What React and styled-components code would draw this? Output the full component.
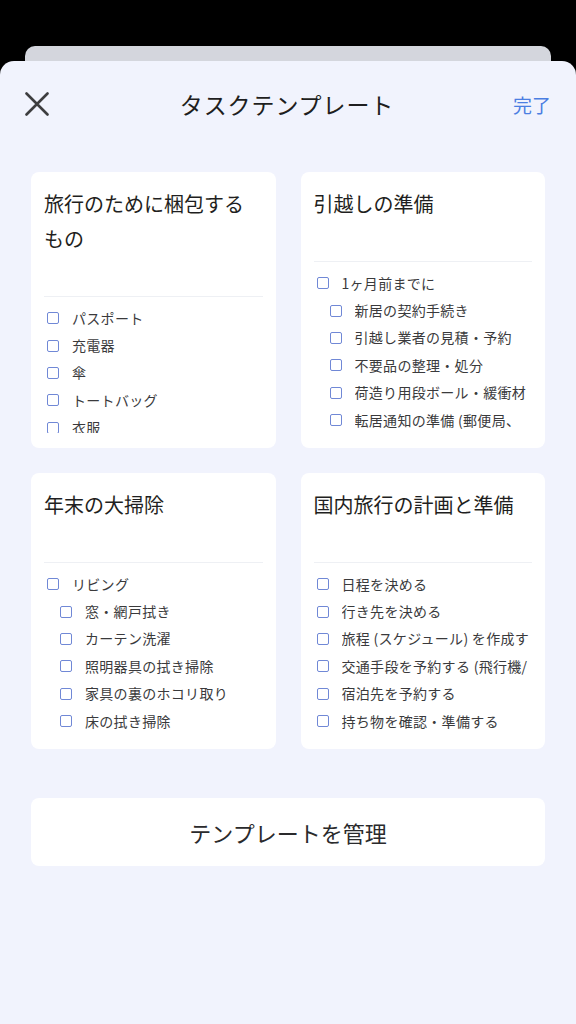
import React from 'react';
import styled, { createGlobalStyle } from 'styled-components';

const templates = [
  {
    title: '旅行のために梱包するもの',
    items: [
      { text: 'パスポート' },
      { text: '充電器' },
      { text: '傘' },
      { text: 'トートバッグ' },
      { text: '衣服' },
      { text: '洗面用具' },
    ],
  },
  {
    title: '引越しの準備',
    items: [
      { text: '1ヶ月前までに' },
      { text: '新居の契約手続き', nested: true },
      { text: '引越し業者の見積・予約', nested: true },
      { text: '不要品の整理・処分', nested: true },
      { text: '荷造り用段ボール・緩衝材', nested: true },
      { text: '転居通知の準備 (郵便局、役所など)', nested: true },
      { text: '1週間前までに' },
    ],
  },
  {
    title: '年末の大掃除',
    items: [
      { text: 'リビング' },
      { text: '窓・網戸拭き', nested: true },
      { text: 'カーテン洗濯', nested: true },
      { text: '照明器具の拭き掃除', nested: true },
      { text: '家具の裏のホコリ取り', nested: true },
      { text: '床の拭き掃除', nested: true },
    ],
  },
  {
    title: '国内旅行の計画と準備',
    items: [
      { text: '日程を決める' },
      { text: '行き先を決める' },
      { text: '旅程 (スケジュール) を作成する' },
      { text: '交通手段を予約する (飛行機/新幹線)' },
      { text: '宿泊先を予約する' },
      { text: '持ち物を確認・準備する' },
    ],
  },
];

const GlobalStyle = createGlobalStyle`
  html, body {
    margin: 0;
    padding: 0;
    background: #000;
  }
  body {
    font-family: 'Noto Sans CJK JP', 'Noto Sans', sans-serif;
    -webkit-font-smoothing: antialiased;
  }
  * {
    box-sizing: border-box;
  }
`;

const CloseIcon = () => (
  <svg width="24" height="24" viewBox="0 0 24 24" fill="none">
    <path
      d="M1.5 1.5L22.5 22.5M22.5 1.5L1.5 22.5"
      stroke="#3d3d3f"
      strokeWidth="2.6"
      strokeLinecap="round"
    />
  </svg>
);

export default function App() {
  return (
    <>
      <GlobalStyle />
      <Screen>
        <BackSheet />
        <Sheet>
          <NavBar>
            <CloseButton aria-label="閉じる">
              <CloseIcon />
            </CloseButton>
            <NavTitle>タスクテンプレート</NavTitle>
            <DoneButton>完了</DoneButton>
          </NavBar>

          <Grid>
            {templates.map(template => (
              <Card key={template.title}>
                <CardTitle>{template.title}</CardTitle>
                <Divider />
                <ItemList>
                  {template.items.map(item => (
                    <Item key={item.text} $nested={item.nested}>
                      <Checkbox />
                      <ItemText>{item.text}</ItemText>
                    </Item>
                  ))}
                </ItemList>
              </Card>
            ))}
          </Grid>

          <ManageButton>テンプレートを管理</ManageButton>
        </Sheet>
      </Screen>
    </>
  );
}

const Screen = styled.div`
  display: flex;
  flex-direction: column;
  width: 576px;
  height: 1024px;
  padding-top: 46px;
  background: #000;
  overflow: hidden;
`;

const BackSheet = styled.div`
  height: 15px;
  margin: 0 25px;
  background: #d4d6dd;
  border-radius: 10px 10px 0 0;
`;

const Sheet = styled.div`
  flex: 1;
  display: flex;
  flex-direction: column;
  background: #f1f3fd;
  border-radius: 14px 14px 0 0;
`;

const NavBar = styled.div`
  display: flex;
  align-items: center;
  justify-content: space-between;
  height: 86px;
  padding: 0 25px;
`;

const CloseButton = styled.button`
  display: flex;
  width: 24px;
  height: 24px;
  padding: 0;
  border: none;
  background: none;
`;

const NavTitle = styled.div`
  font-size: 23px;
  letter-spacing: 0.9px;
  color: #1e1e20;
  margin-left: 12px;
`;

const DoneButton = styled.button`
  padding: 0;
  border: none;
  background: none;
  font-family: inherit;
  font-size: 19px;
  color: #4b7ee2;
`;

const Grid = styled.div`
  display: grid;
  grid-template-columns: 1fr 1fr;
  gap: 25px;
  margin-top: 25px;
  padding: 0 31px;
`;

const Card = styled.div`
  display: flex;
  flex-direction: column;
  height: 276px;
  padding: 14px 13px 15px;
  background: #fff;
  border-radius: 8px;
  min-width: 0;
`;

const CardTitle = styled.div`
  font-size: 20px;
  font-weight: 400;
  line-height: 35px;
  color: #1f1f21;
  margin-bottom: 40px;
`;

const Divider = styled.div`
  flex-shrink: 0;
  height: 1px;
  background: #eef0f4;
`;

const ItemList = styled.div`
  flex: 1;
  min-height: 0;
  padding-top: 7px;
  overflow: hidden;
`;

const Item = styled.div`
  display: flex;
  align-items: center;
  height: 27.4px;
  padding-left: ${props => (props.$nested ? 16 : 3)}px;
`;

const Checkbox = styled.span`
  flex-shrink: 0;
  width: 12px;
  height: 12px;
  margin-top: 1px;
  border: 1.5px solid #7088d6;
  border-radius: 2px;
`;

const ItemText = styled.span`
  flex: 1;
  min-width: 0;
  height: 22px;
  margin-left: 13px;
  font-size: 14px;
  letter-spacing: 0.3px;
  line-height: 22px;
  color: #3a3a3c;
  overflow: hidden;
  line-break: anywhere;
`;

const ManageButton = styled.button`
  height: 68px;
  margin: 49px 31px 0;
  border: none;
  border-radius: 8px;
  background: #fff;
  font-family: inherit;
  font-size: 22px;
  color: #2a2a2c;
`;
